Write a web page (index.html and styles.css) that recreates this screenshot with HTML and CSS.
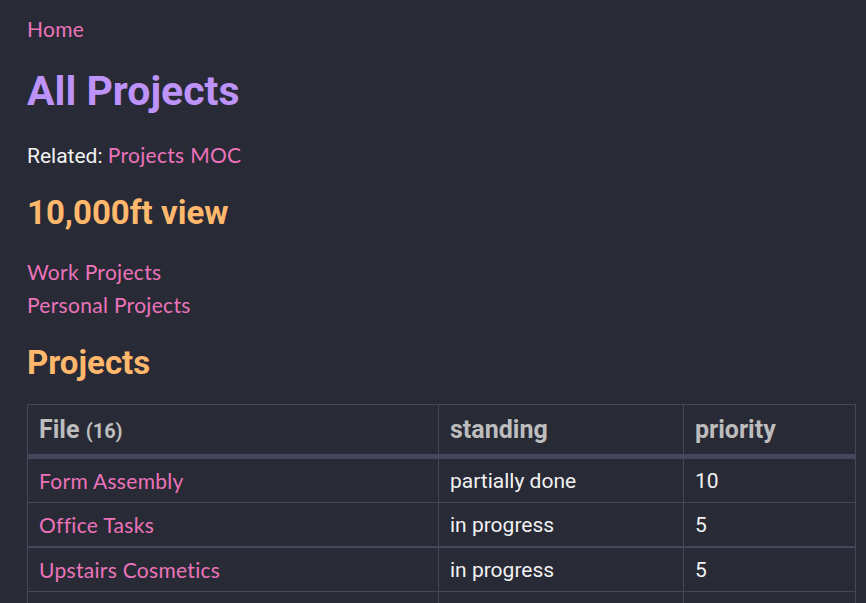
FILE: index.html
```html
<!DOCTYPE html>
<html>
<head>
<meta charset="utf-8">
<link rel="stylesheet" href="styles.css">
</head>
<body>
<div class="page">
  <a class="link crumb" href="#">Home</a>
  <h1 class="title">All Projects</h1>
  <p class="related">Related: <a class="link" href="#">Projects MOC</a></p>
  <h2 class="h2">10,000ft view</h2>
  <div class="links">
    <a class="link" href="#">Work Projects</a>
    <a class="link" href="#">Personal Projects</a>
  </div>
  <h2 class="h2 h2-projects">Projects</h2>
  <table class="tbl">
    <thead>
      <tr>
        <th class="c1">File <span class="count">(16)</span></th>
        <th class="c2">standing</th>
        <th class="c3">priority</th>
      </tr>
    </thead>
    <tbody>
      <tr><td><a class="link" href="#">Form Assembly</a></td><td>partially done</td><td>10</td></tr>
      <tr class="thick"><td><a class="link" href="#">Office Tasks</a></td><td>in progress</td><td>5</td></tr>
      <tr><td><a class="link" href="#">Upstairs Cosmetics</a></td><td>in progress</td><td>5</td></tr>
      <tr class="last"><td></td><td></td><td></td></tr>
    </tbody>
  </table>
</div>
</body>
</html>
```
FILE: styles.css
```css
html, body {
  margin: 0;
  padding: 0;
  background: #282a36;
  overflow: hidden;
}
.page {
  padding: 14px 10px 0 27px;
  font-family: Roboto, "Liberation Sans", sans-serif;
  color: #f2f2f2;
}
.link {
  font-family: Lato, "Open Sans", sans-serif;
  font-weight: 400;
  color: #ec73ba;
  text-decoration: none;
  font-size: 21px;
  letter-spacing: 0.3px;
}
.crumb {
  display: block;
  line-height: 30px;
}
.title {
  margin: 19px 0 0 0;
  font-size: 41px;
  font-weight: 700;
  color: #bd93f9;
  line-height: 56px;
}
.related {
  margin: 21px 0 0 0;
  font-size: 21px;
  line-height: 30px;
}
.h2 {
  margin: 21px 0 0 0;
  font-size: 33px;
  font-weight: 700;
  color: #ffb86c;
  line-height: 42px;
}
.links {
  display: flex;
  flex-direction: column;
  margin-top: 21px;
}
.links .link {
  line-height: 33px;
}
.h2-projects {
  margin-top: 21px;
}
.tbl {
  margin-top: 20px;
  border-collapse: collapse;
  width: 829px;
}
.tbl th, .tbl td {
  border: 1px solid #44475a;
  text-align: left;
  padding: 0 11px;
}
.tbl th {
  height: 49px;
  font-size: 25px;
  font-weight: 700;
  color: #bdbdbd;
  border-bottom: 5px solid #44475a;
}
.count {
  font-size: 20px;
}
.c1 { width: 388px; }
.c2 { width: 222px; }
.tbl td {
  height: 43px;
  font-size: 21px;
  color: #f2f2f2;
}
.tbl tr.thick td {
  border-bottom: 2px solid #44475a;
}
```
